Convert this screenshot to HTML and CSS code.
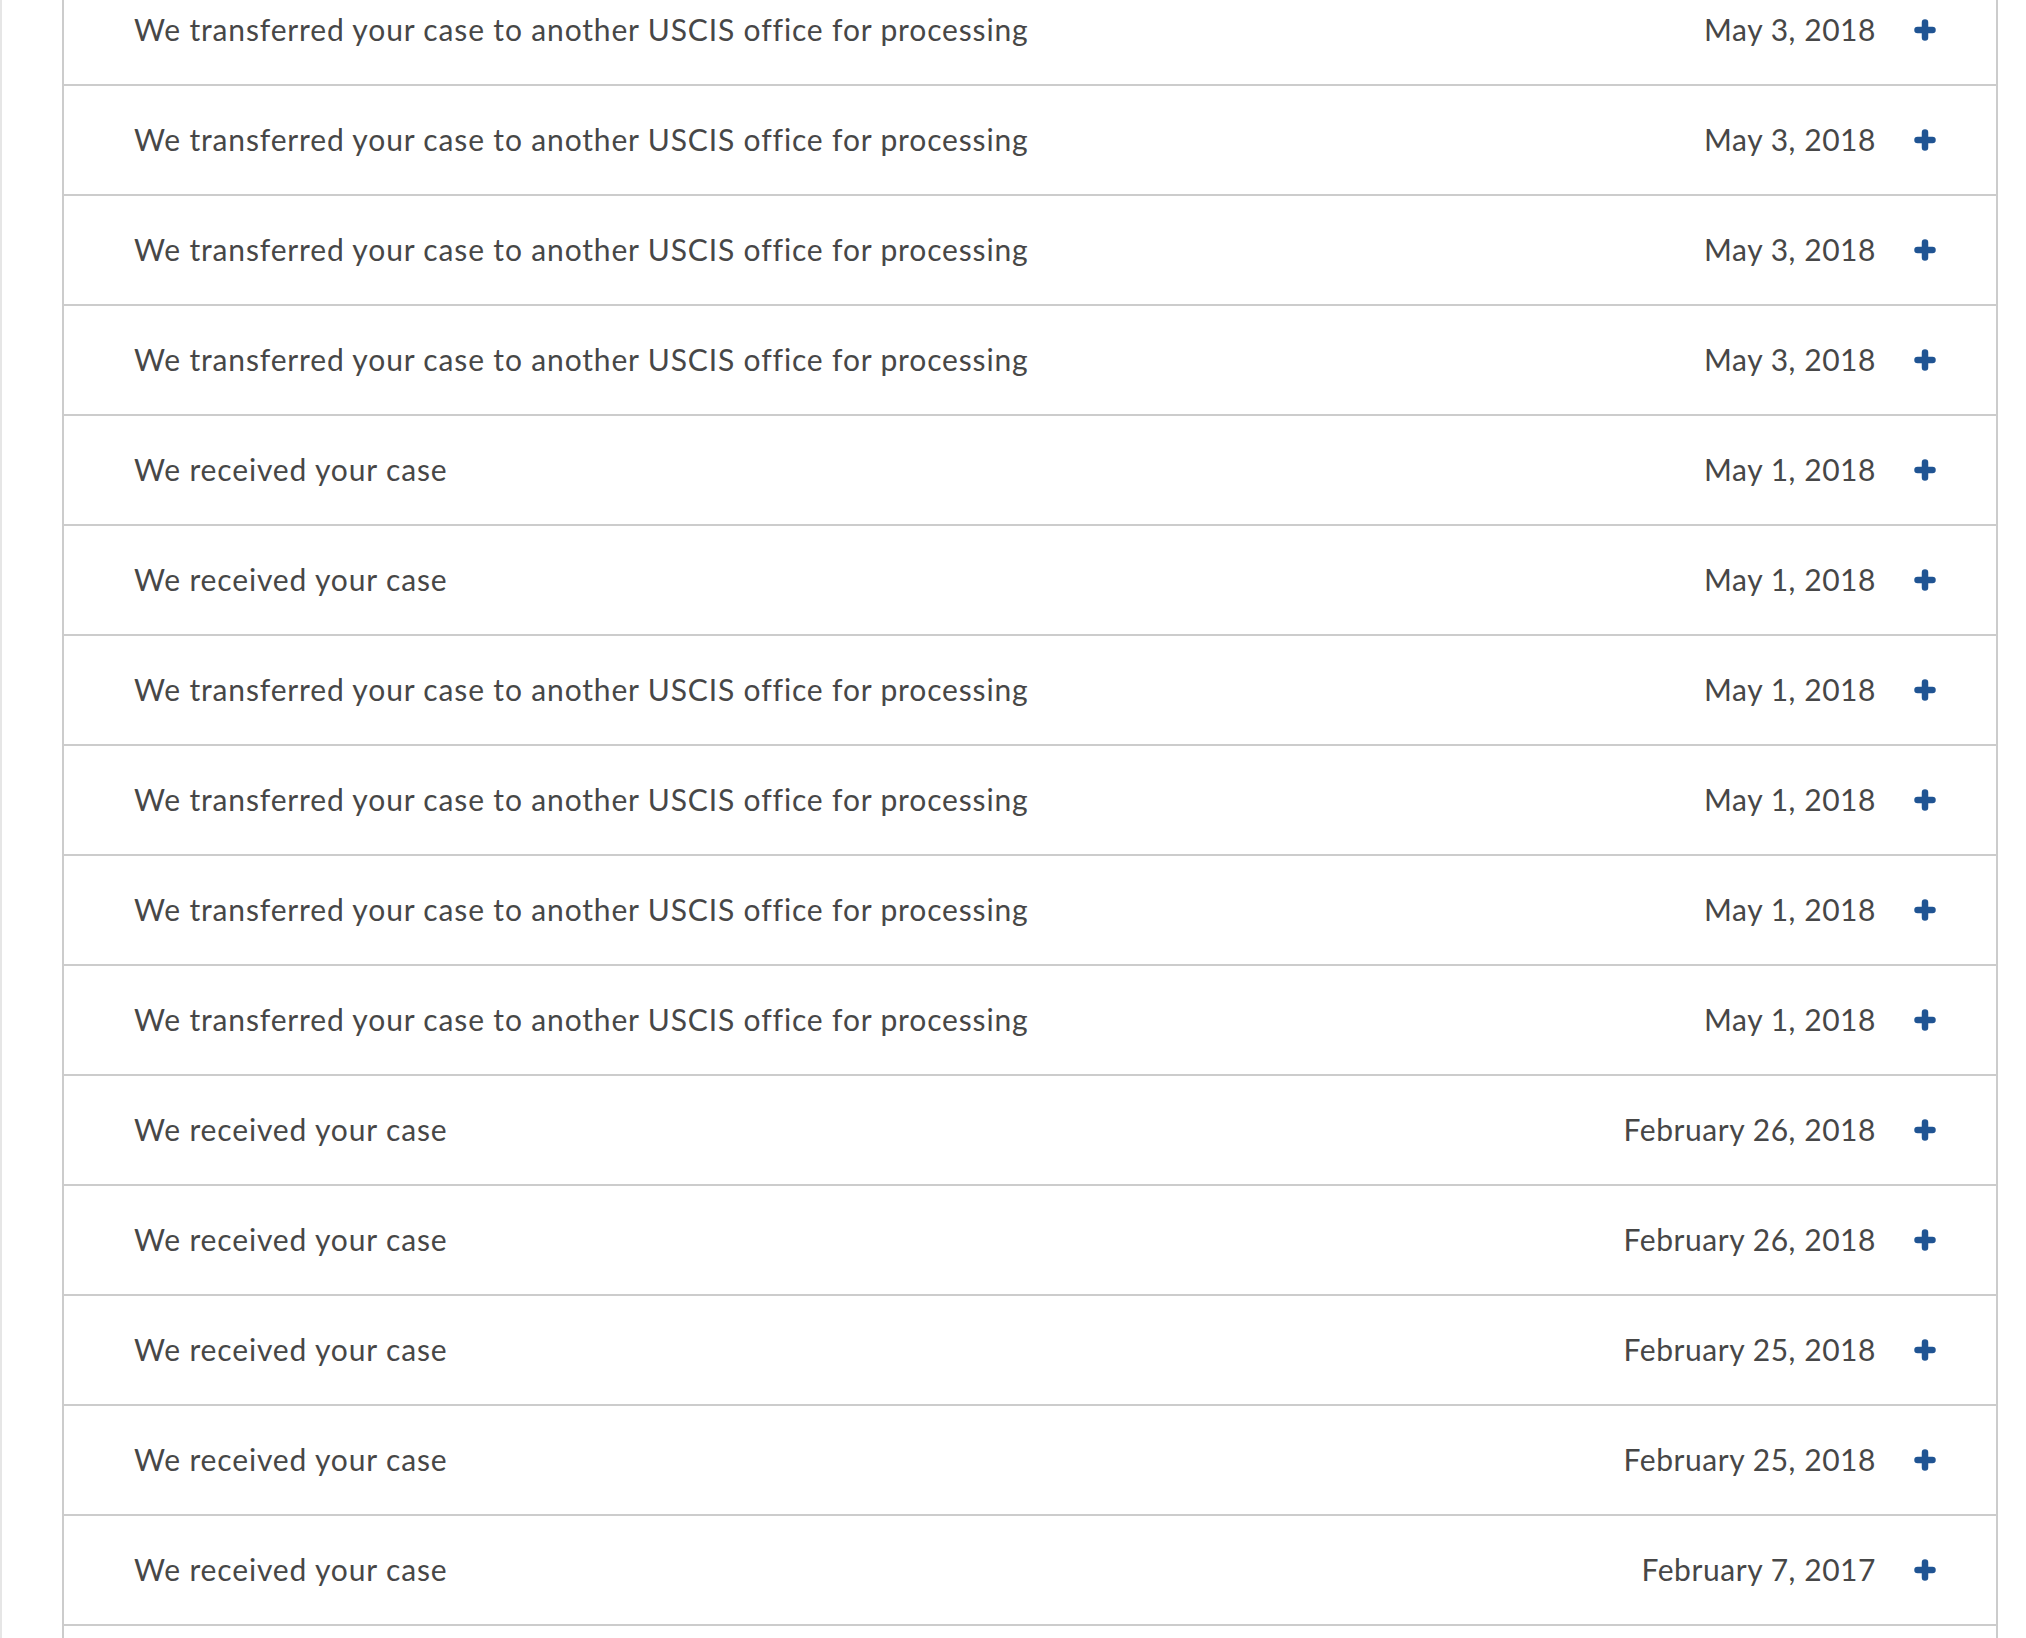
FILE: index.html
```html
<!DOCTYPE html>
<html lang="en">
<head>
<meta charset="utf-8">
<title>Case history</title>
<link rel="stylesheet" href="styles.css">
</head>
<body>
<div class="page">
  <div class="history">
    <div class="row"><span class="event">We transferred your case to another USCIS office for processing</span><span class="date">May 3, 2018</span><svg class="plus" viewBox="0 0 22 22"><path d="M11 3.5V18.5M3.5 11H18.5"/></svg></div>
    <div class="row"><span class="event">We transferred your case to another USCIS office for processing</span><span class="date">May 3, 2018</span><svg class="plus" viewBox="0 0 22 22"><path d="M11 3.5V18.5M3.5 11H18.5"/></svg></div>
    <div class="row"><span class="event">We transferred your case to another USCIS office for processing</span><span class="date">May 3, 2018</span><svg class="plus" viewBox="0 0 22 22"><path d="M11 3.5V18.5M3.5 11H18.5"/></svg></div>
    <div class="row"><span class="event">We transferred your case to another USCIS office for processing</span><span class="date">May 3, 2018</span><svg class="plus" viewBox="0 0 22 22"><path d="M11 3.5V18.5M3.5 11H18.5"/></svg></div>
    <div class="row"><span class="event">We received your case</span><span class="date">May 1, 2018</span><svg class="plus" viewBox="0 0 22 22"><path d="M11 3.5V18.5M3.5 11H18.5"/></svg></div>
    <div class="row"><span class="event">We received your case</span><span class="date">May 1, 2018</span><svg class="plus" viewBox="0 0 22 22"><path d="M11 3.5V18.5M3.5 11H18.5"/></svg></div>
    <div class="row"><span class="event">We transferred your case to another USCIS office for processing</span><span class="date">May 1, 2018</span><svg class="plus" viewBox="0 0 22 22"><path d="M11 3.5V18.5M3.5 11H18.5"/></svg></div>
    <div class="row"><span class="event">We transferred your case to another USCIS office for processing</span><span class="date">May 1, 2018</span><svg class="plus" viewBox="0 0 22 22"><path d="M11 3.5V18.5M3.5 11H18.5"/></svg></div>
    <div class="row"><span class="event">We transferred your case to another USCIS office for processing</span><span class="date">May 1, 2018</span><svg class="plus" viewBox="0 0 22 22"><path d="M11 3.5V18.5M3.5 11H18.5"/></svg></div>
    <div class="row"><span class="event">We transferred your case to another USCIS office for processing</span><span class="date">May 1, 2018</span><svg class="plus" viewBox="0 0 22 22"><path d="M11 3.5V18.5M3.5 11H18.5"/></svg></div>
    <div class="row"><span class="event">We received your case</span><span class="date">February 26, 2018</span><svg class="plus" viewBox="0 0 22 22"><path d="M11 3.5V18.5M3.5 11H18.5"/></svg></div>
    <div class="row"><span class="event">We received your case</span><span class="date">February 26, 2018</span><svg class="plus" viewBox="0 0 22 22"><path d="M11 3.5V18.5M3.5 11H18.5"/></svg></div>
    <div class="row"><span class="event">We received your case</span><span class="date">February 25, 2018</span><svg class="plus" viewBox="0 0 22 22"><path d="M11 3.5V18.5M3.5 11H18.5"/></svg></div>
    <div class="row"><span class="event">We received your case</span><span class="date">February 25, 2018</span><svg class="plus" viewBox="0 0 22 22"><path d="M11 3.5V18.5M3.5 11H18.5"/></svg></div>
    <div class="row"><span class="event">We received your case</span><span class="date">February 7, 2017</span><svg class="plus" viewBox="0 0 22 22"><path d="M11 3.5V18.5M3.5 11H18.5"/></svg></div>
    <div class="row row-empty"></div>
  </div>
</div>
</body>
</html>
```

FILE: styles.css
```css
html, body {
  margin: 0;
  padding: 0;
  background: #fff;
}
body {
  font-family: Lato, "Noto Sans", "Liberation Sans", sans-serif;
  color: #474747;
  overflow: hidden;
  height: 1638px;
}
.page {
  border-left: 2px solid #e6e6e6;
  padding-left: 60px;
  padding-right: 28px;
  height: 1638px;
  box-sizing: border-box;
  overflow: hidden;
}
.history {
  margin-top: -26px;
  border: 2px solid #cccccc;
  border-bottom: none;
}
.row {
  display: flex;
  align-items: center;
  height: 108px;
  border-bottom: 2px solid #cccccc;
  padding-left: 70px;
  padding-right: 60px;
  font-size: 30px;
  letter-spacing: 0.85px;
}
.event {
  flex: 1;
  margin-bottom: 2px;
}
.date {
  text-align: right;
  margin-right: 38px;
  margin-bottom: 2px;
  letter-spacing: 0.55px;
}
.plus {
  width: 22px;
  height: 22px;
  flex: none;
}
.plus path {
  stroke: #205493;
  stroke-width: 6.5;
  stroke-linecap: round;
  fill: none;
}
```
